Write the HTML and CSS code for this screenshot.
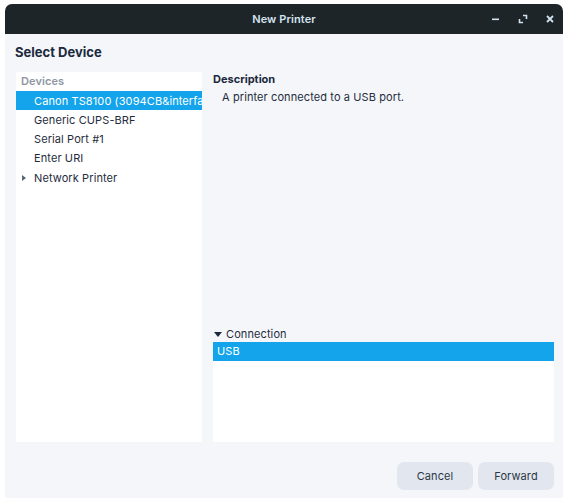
FILE: index.html
```html
<!DOCTYPE html>
<html>
<head>
<meta charset="utf-8">
<link rel="stylesheet" href="styles.css">
</head>
<body>
<div class="window">
  <div class="titlebar">
    <div class="title">New Printer</div>
    <div class="controls">
      <svg class="ctl" width="10" height="10" viewBox="0 0 10 10"><rect x="1" y="4.5" width="7" height="1.6" fill="#cfe3f0"/></svg>
      <svg class="ctl" width="10" height="10" viewBox="0 0 10 10"><path d="M5 1.5H8.5V5M1.5 5V8.5H5" stroke="#cfe3f0" stroke-width="1.6" fill="none"/></svg>
      <svg class="ctl" width="10" height="10" viewBox="0 0 10 10"><path d="M2 2L8 8M8 2L2 8" stroke="#cfe3f0" stroke-width="1.8"/></svg>
    </div>
  </div>
  <div class="content">
    <h1 class="heading">Select Device</h1>
    <div class="panes">
      <div class="devices">
        <div class="dev-header">Devices</div>
        <div class="row selected">Canon TS8100 (3094CB&amp;interface=1)</div>
        <div class="row">Generic CUPS-BRF</div>
        <div class="row">Serial Port #1</div>
        <div class="row">Enter URI</div>
        <div class="row expander"><span class="arrow-r"></span>Network Printer</div>
      </div>
      <div class="detail">
        <div class="desc-title">Description</div>
        <div class="desc-text">A printer connected to a USB port.</div>
        <div class="spacer"></div>
        <div class="conn-title"><span class="arrow-d"></span>Connection</div>
        <div class="conn-list">
          <div class="conn-row">USB</div>
        </div>
      </div>
    </div>
    <div class="buttons">
      <button class="btn">Cancel</button>
      <button class="btn">Forward</button>
    </div>
  </div>
</div>
</body>
</html>
```
FILE: styles.css
```css
html, body {
  margin: 0;
  padding: 0;
  background: #ffffff;
}
body {
  font-family: Inter, "Noto Sans", sans-serif;
  font-size: 11px;
  color: #1f2d3d;
  letter-spacing: 0.1px;
}
.window {
  margin: 4px 5px 0 5px;
  width: 558px;
  height: 494px;
  background: #f5f6fa;
  display: flex;
  flex-direction: column;
  border-radius: 7px 7px 0 0;
  overflow: hidden;
}
.titlebar {
  height: 30px;
  background: #1e2529;
  display: flex;
  align-items: center;
  justify-content: center;
  position: relative;
  flex-shrink: 0;
}
.title {
  color: #d3e4f0;
  font-weight: 600;
  font-size: 11px;
}
.controls {
  position: absolute;
  right: 8px;
  top: 10px;
  display: flex;
  gap: 17px;
}
.ctl {
  display: block;
}
.content {
  flex: 1;
  display: flex;
  flex-direction: column;
  padding: 0 9px 0 10px;
}
.heading {
  margin: 10px 0 0 0;
  font-size: 13px;
  font-weight: 700;
  color: #1b2a3c;
  height: 28px;
  line-height: 16px;
  letter-spacing: 0;
}
.panes {
  display: flex;
  height: 370px;
  gap: 11px;
}
.devices {
  width: 186px;
  margin-left: 1px;
  background: #ffffff;
  overflow: hidden;
  white-space: nowrap;
}
.dev-header {
  height: 19px;
  line-height: 19px;
  padding-left: 5px;
  color: #8e96a1;
  font-weight: 600;
}
.row {
  height: 19px;
  line-height: 21px;
  padding-left: 18px;
  color: #1f2d3d;
}
.row.selected {
  background: #13a4ec;
  color: #ffffff;
}
.row.expander {
  padding-left: 6px;
  display: flex;
  align-items: center;
  padding-top: 3px;
  height: 16px;
  line-height: 16px;
}
.arrow-r {
  width: 0;
  height: 0;
  border-top: 3px solid transparent;
  border-bottom: 3px solid transparent;
  border-left: 4px solid #5b6672;
  margin-right: 8px;
}
.detail {
  flex: 1;
  display: flex;
  flex-direction: column;
}
.desc-title {
  font-weight: 700;
  color: #1b2a3c;
  height: 14px;
  line-height: 14px;
  letter-spacing: 0;
}
.desc-text {
  padding-left: 9px;
  margin-top: 4px;
  line-height: 14px;
}
.spacer {
  flex: 1;
}
.conn-title {
  display: flex;
  align-items: center;
  padding-left: 1px;
  height: 14px;
  line-height: 14px;
  margin-bottom: 1px;
}
.arrow-d {
  width: 0;
  height: 0;
  border-left: 4px solid transparent;
  border-right: 4px solid transparent;
  border-top: 5px solid #1b2a3c;
  margin-right: 4px;
}
.conn-list {
  height: 100px;
  background: #ffffff;
}
.conn-row {
  height: 19px;
  line-height: 19px;
  padding-left: 4px;
  background: #13a4ec;
  color: #ffffff;
}
.buttons {
  display: flex;
  justify-content: flex-end;
  gap: 5px;
  margin-top: 20px;
}
.btn {
  font-family: Inter, "Noto Sans", sans-serif;
  font-size: 11px;
  letter-spacing: 0.1px;
  color: #2b3846;
  background: #e2e6ee;
  border: none;
  border-radius: 7px;
  height: 28px;
  width: 76px;
  padding: 0;
}
```
